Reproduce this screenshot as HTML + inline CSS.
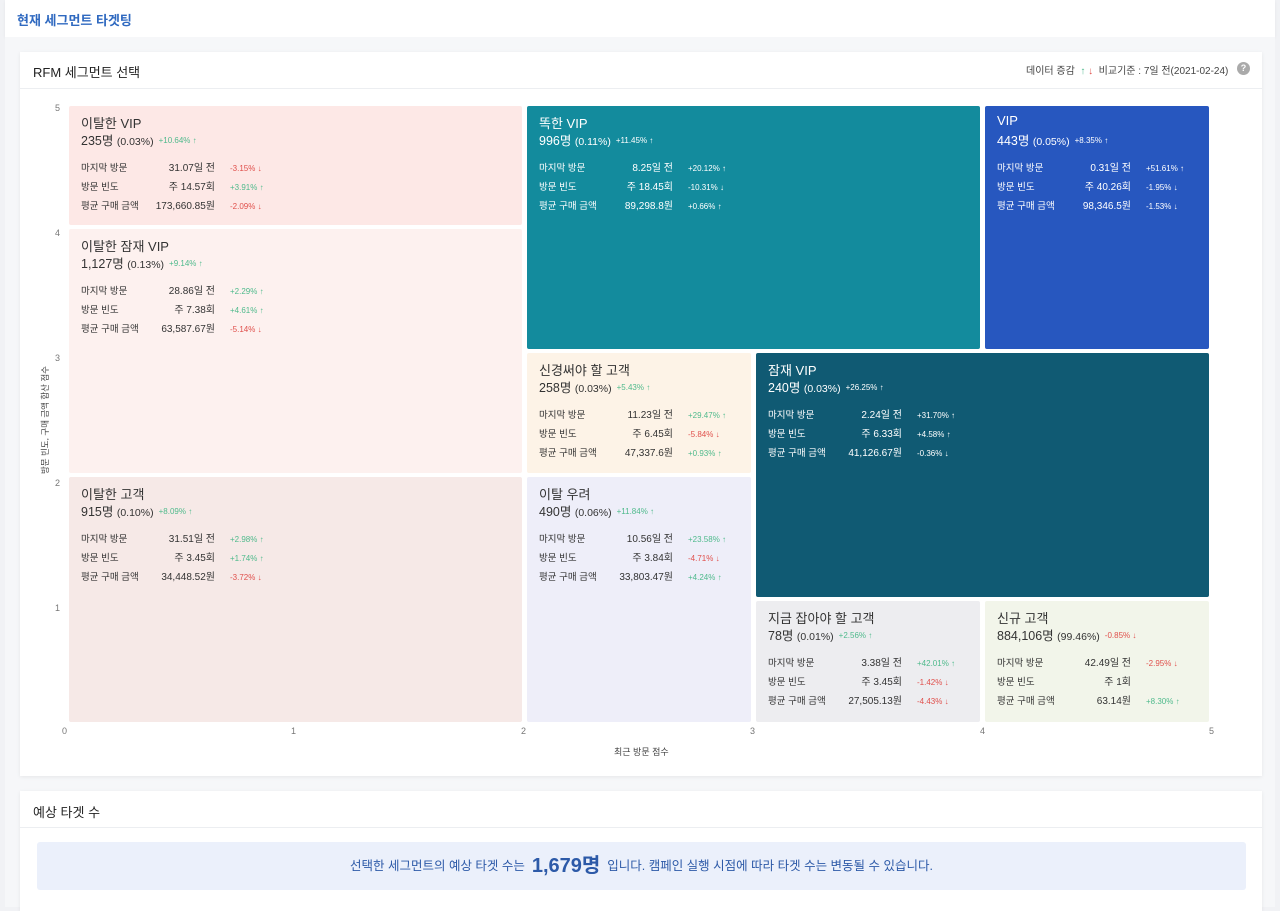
<!DOCTYPE html>
<html><head><meta charset="utf-8"><style>
*{box-sizing:border-box;margin:0;padding:0}
body{width:1280px;height:901px;background:#f1f2f5;font-family:"Liberation Sans","Noto Sans CJK KR",sans-serif;position:relative;overflow:hidden;color:#333}
.abs{position:absolute}
.top{left:5px;top:0;width:1270px;height:37px;background:#fff;box-shadow:0 1px 3px rgba(0,0,0,.06)}
.top span{position:absolute;left:12px;top:10px;font-size:13px;color:#2f69c0;font-weight:bold}
.card{background:#fff;box-shadow:0 1px 4px rgba(0,0,0,.07)}
.ch{font-size:13px;color:#222}
.tile{position:absolute;border-radius:2px}
.tile .t{position:absolute;left:12px;top:7px;font-size:13px}
.tile .c{position:absolute;left:12px;top:24px;font-size:12.5px;white-space:nowrap}
.tile .c small{font-size:10.5px}
.tile .c i{font-style:normal;font-size:8px;margin-left:5px;vertical-align:2px}
.row{position:absolute;left:12px;font-size:9.5px;width:200px;height:14px;white-space:nowrap;line-height:14px}
.row span{position:absolute;top:0;line-height:14px}
.row .l{left:0}
.row .v{right:66px;font-size:10px}
.row .p{left:149px;font-size:8px;top:0px}
.g{color:#4fba8c}.r{color:#e0504c}
.dark{color:#fff}.dark .g,.dark .r{color:#fff}
.ax{font-size:9px;color:#777;position:absolute}
</style></head><body>
<div class="abs top"><span>현재 세그먼트 타겟팅</span></div>
<div class="abs" style="left:5px;top:37px;width:1270px;height:870px;background:#f6f7f9"></div>
<div class="abs card" style="left:20px;top:52px;width:1242px;height:724px"></div>
<div class="abs ch" style="left:33px;top:62px">RFM 세그먼트 선택</div>
<div class="abs" style="left:20px;top:88px;width:1242px;height:1px;background:#eceef1"></div>
<div class="abs" style="left:1026px;top:62px;font-size:10px;color:#444;white-space:nowrap">데이터 증감 &nbsp;<span class="g">↑</span> <span class="r">↓</span> &nbsp;비교기준 : 7일 전(2021-02-24)</div>
<div class="abs" style="left:1237px;top:62px;width:13px;height:13px;border-radius:50%;background:#aaa;color:#fff;font-size:9px;text-align:center;line-height:13px;font-weight:bold">?</div>

<div class="ax" style="left:55px;top:103px">5</div>
<div class="ax" style="left:55px;top:228px">4</div>
<div class="ax" style="left:55px;top:353px">3</div>
<div class="ax" style="left:55px;top:478px">2</div>
<div class="ax" style="left:55px;top:603px">1</div>
<div class="ax" style="left:62px;top:726px">0</div>
<div class="ax" style="left:291px;top:726px">1</div>
<div class="ax" style="left:521px;top:726px">2</div>
<div class="ax" style="left:750px;top:726px">3</div>
<div class="ax" style="left:980px;top:726px">4</div>
<div class="ax" style="left:1209px;top:726px">5</div>
<div class="ax" style="left:614px;top:745px;color:#444">최근 방문 점수</div>
<div class="ax" style="left:-30px;top:414px;width:150px;text-align:center;transform:rotate(-90deg);color:#444;font-size:8.5px">방문 빈도, 구매 금액 합산 점수</div>

<div class="tile" style="left:69px;top:106px;width:453px;height:119px;background:#fde8e6">
<div class="t">이탈한 VIP</div><div class="c">235명 <small>(0.03%)</small><i class="g">+10.64% ↑</i></div>
<div class="row" style="top:56px"><span class="l">마지막 방문</span><span class="v">31.07일 전</span><span class="p r">-3.15% ↓</span></div>
<div class="row" style="top:75px"><span class="l">방문 빈도</span><span class="v">주 14.57회</span><span class="p g">+3.91% ↑</span></div>
<div class="row" style="top:94px"><span class="l">평균 구매 금액</span><span class="v">173,660.85원</span><span class="p r">-2.09% ↓</span></div></div>

<div class="tile" style="left:69px;top:229px;width:453px;height:244px;background:#fdf1ef">
<div class="t">이탈한 잠재 VIP</div><div class="c">1,127명 <small>(0.13%)</small><i class="g">+9.14% ↑</i></div>
<div class="row" style="top:56px"><span class="l">마지막 방문</span><span class="v">28.86일 전</span><span class="p g">+2.29% ↑</span></div>
<div class="row" style="top:75px"><span class="l">방문 빈도</span><span class="v">주 7.38회</span><span class="p g">+4.61% ↑</span></div>
<div class="row" style="top:94px"><span class="l">평균 구매 금액</span><span class="v">63,587.67원</span><span class="p r">-5.14% ↓</span></div></div>

<div class="tile" style="left:69px;top:477px;width:453px;height:245px;background:#f6e9e7">
<div class="t">이탈한 고객</div><div class="c">915명 <small>(0.10%)</small><i class="g">+8.09% ↑</i></div>
<div class="row" style="top:56px"><span class="l">마지막 방문</span><span class="v">31.51일 전</span><span class="p g">+2.98% ↑</span></div>
<div class="row" style="top:75px"><span class="l">방문 빈도</span><span class="v">주 3.45회</span><span class="p g">+1.74% ↑</span></div>
<div class="row" style="top:94px"><span class="l">평균 구매 금액</span><span class="v">34,448.52원</span><span class="p r">-3.72% ↓</span></div></div>

<div class="tile dark" style="left:527px;top:106px;width:453px;height:243px;background:#138b9d">
<div class="t">똑한 VIP</div><div class="c">996명 <small>(0.11%)</small><i>+11.45% ↑</i></div>
<div class="row" style="top:56px"><span class="l">마지막 방문</span><span class="v">8.25일 전</span><span class="p">+20.12% ↑</span></div>
<div class="row" style="top:75px"><span class="l">방문 빈도</span><span class="v">주 18.45회</span><span class="p">-10.31% ↓</span></div>
<div class="row" style="top:94px"><span class="l">평균 구매 금액</span><span class="v">89,298.8원</span><span class="p">+0.66% ↑</span></div></div>

<div class="tile dark" style="left:985px;top:106px;width:224px;height:243px;background:#2757bf">
<div class="t">VIP</div><div class="c">443명 <small>(0.05%)</small><i>+8.35% ↑</i></div>
<div class="row" style="top:56px"><span class="l">마지막 방문</span><span class="v">0.31일 전</span><span class="p">+51.61% ↑</span></div>
<div class="row" style="top:75px"><span class="l">방문 빈도</span><span class="v">주 40.26회</span><span class="p">-1.95% ↓</span></div>
<div class="row" style="top:94px"><span class="l">평균 구매 금액</span><span class="v">98,346.5원</span><span class="p">-1.53% ↓</span></div></div>

<div class="tile" style="left:527px;top:353px;width:224px;height:120px;background:#fdf3e7">
<div class="t">신경써야 할 고객</div><div class="c">258명 <small>(0.03%)</small><i class="g">+5.43% ↑</i></div>
<div class="row" style="top:56px"><span class="l">마지막 방문</span><span class="v">11.23일 전</span><span class="p g">+29.47% ↑</span></div>
<div class="row" style="top:75px"><span class="l">방문 빈도</span><span class="v">주 6.45회</span><span class="p r">-5.84% ↓</span></div>
<div class="row" style="top:94px"><span class="l">평균 구매 금액</span><span class="v">47,337.6원</span><span class="p g">+0.93% ↑</span></div></div>

<div class="tile dark" style="left:756px;top:353px;width:453px;height:244px;background:#105a73">
<div class="t">잠재 VIP</div><div class="c">240명 <small>(0.03%)</small><i>+26.25% ↑</i></div>
<div class="row" style="top:56px"><span class="l">마지막 방문</span><span class="v">2.24일 전</span><span class="p">+31.70% ↑</span></div>
<div class="row" style="top:75px"><span class="l">방문 빈도</span><span class="v">주 6.33회</span><span class="p">+4.58% ↑</span></div>
<div class="row" style="top:94px"><span class="l">평균 구매 금액</span><span class="v">41,126.67원</span><span class="p">-0.36% ↓</span></div></div>

<div class="tile" style="left:527px;top:477px;width:224px;height:245px;background:#eeeef9">
<div class="t">이탈 우려</div><div class="c">490명 <small>(0.06%)</small><i class="g">+11.84% ↑</i></div>
<div class="row" style="top:56px"><span class="l">마지막 방문</span><span class="v">10.56일 전</span><span class="p g">+23.58% ↑</span></div>
<div class="row" style="top:75px"><span class="l">방문 빈도</span><span class="v">주 3.84회</span><span class="p r">-4.71% ↓</span></div>
<div class="row" style="top:94px"><span class="l">평균 구매 금액</span><span class="v">33,803.47원</span><span class="p g">+4.24% ↑</span></div></div>

<div class="tile" style="left:756px;top:601px;width:224px;height:121px;background:#ededf0">
<div class="t">지금 잡아야 할 고객</div><div class="c">78명 <small>(0.01%)</small><i class="g">+2.56% ↑</i></div>
<div class="row" style="top:56px"><span class="l">마지막 방문</span><span class="v">3.38일 전</span><span class="p g">+42.01% ↑</span></div>
<div class="row" style="top:75px"><span class="l">방문 빈도</span><span class="v">주 3.45회</span><span class="p r">-1.42% ↓</span></div>
<div class="row" style="top:94px"><span class="l">평균 구매 금액</span><span class="v">27,505.13원</span><span class="p r">-4.43% ↓</span></div></div>

<div class="tile" style="left:985px;top:601px;width:224px;height:121px;background:#f2f5ea">
<div class="t">신규 고객</div><div class="c">884,106명 <small>(99.46%)</small><i class="r">-0.85% ↓</i></div>
<div class="row" style="top:56px"><span class="l">마지막 방문</span><span class="v">42.49일 전</span><span class="p r">-2.95% ↓</span></div>
<div class="row" style="top:75px"><span class="l">방문 빈도</span><span class="v">주 1회</span></div>
<div class="row" style="top:94px"><span class="l">평균 구매 금액</span><span class="v">63.14원</span><span class="p g">+8.30% ↑</span></div></div>

<div class="abs card" style="left:20px;top:791px;width:1242px;height:120px"></div>
<div class="abs ch" style="left:33px;top:802px">예상 타겟 수</div>
<div class="abs" style="left:20px;top:827px;width:1242px;height:1px;background:#eceef1"></div>
<div class="abs" style="left:37px;top:842px;width:1209px;height:48px;background:#ebf0fb;border-radius:3px;text-align:center;line-height:48px;font-size:12.5px;color:#2d5aa8;white-space:nowrap">선택한 세그먼트의 예상 타겟 수는 &nbsp;<span style="font-size:20px;font-weight:bold;vertical-align:-2px">1,679명</span>&nbsp; 입니다. 캠페인 실행 시점에 따라 타겟 수는 변동될 수 있습니다.</div>
</body></html>
